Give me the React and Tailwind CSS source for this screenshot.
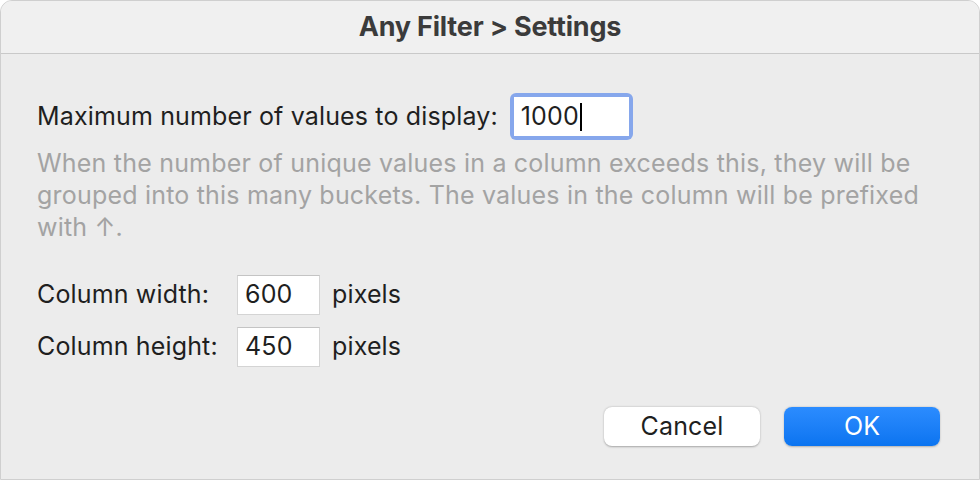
export default function App() {
  return (
    <div className="w-[980px] h-[480px] bg-white overflow-hidden" style={{ fontFamily: 'Inter, "Noto Sans", sans-serif' }}>
      <div className="w-full h-full rounded-t-[12px] bg-[#ececec] border border-[#cfcfcf] flex flex-col overflow-hidden">
        <div className="h-[53px] shrink-0 bg-[#f0f0f0] border-b border-[#c9c9c9] flex items-center justify-center">
          <span className="text-[27px] font-bold text-[#3b3b3b] tracking-[-0.2px]">Any Filter &gt; Settings</span>
        </div>
        <div className="flex-1 flex flex-col pl-[36px] pr-[39px] pt-[39px] tracking-[0.15px]">
          <div className="flex items-center">
            <span className="text-[25px] text-[#1f1f1f]">Maximum number of values to display:</span>
            <div className="ml-[12px] w-[123px] h-[47px] rounded-[6px] bg-[#86a7ec] p-[4px]">
              <div className="w-full h-full bg-white flex items-center pl-[7px] text-[25px] text-[#1f1f1f]">
                1000<span className="inline-block w-[2px] h-[28px] bg-black ml-[1px]"></span>
              </div>
            </div>
          </div>
          <p className="mt-[7px] text-[25px] leading-[32px] text-[#a3a3a3] tracking-[0.2px]">
            <span className="block whitespace-nowrap">When the number of unique values in a column exceeds this, they will be</span>
            <span className="block whitespace-nowrap">grouped into this many buckets. The values in the column will be prefixed</span>
            <span className="block whitespace-nowrap">with ↑.</span>
          </p>
          <div className="mt-[32px] grid grid-cols-[200px_83px_auto] items-center gap-y-[12px]">
            <span className="text-[25px] text-[#1f1f1f]">Column width:</span>
            <div className="h-[40px] bg-white border border-[#d4d4d4] border-t-[#c4c4c4] flex items-center pl-[7px] text-[25px] text-[#1f1f1f]">600</div>
            <span className="ml-[12px] text-[25px] text-[#1f1f1f]">pixels</span>
            <span className="text-[25px] text-[#1f1f1f]">Column height:</span>
            <div className="h-[40px] bg-white border border-[#d4d4d4] border-t-[#c4c4c4] flex items-center pl-[7px] text-[25px] text-[#1f1f1f]">450</div>
            <span className="ml-[12px] text-[25px] text-[#1f1f1f]">pixels</span>
          </div>
          <div className="mt-auto mb-[33px] flex justify-end gap-[24px]">
            <button className="w-[156px] h-[39px] rounded-[8px] bg-white shadow-[0_0.5px_2px_rgba(0,0,0,0.3)] text-[25px] text-[#1f1f1f]">Cancel</button>
            <button className="w-[156px] h-[39px] rounded-[8px] bg-gradient-to-b from-[#2b8cff] to-[#0a74f0] shadow-[0_0.5px_2px_rgba(0,0,0,0.25)] text-[25px] text-white">OK</button>
          </div>
        </div>
      </div>
    </div>
  );
}
